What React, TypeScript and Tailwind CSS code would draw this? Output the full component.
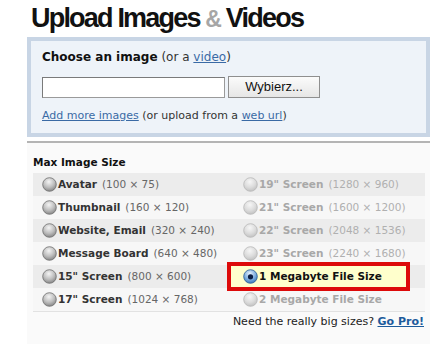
import React from "react";

function Radio({ variant }: { variant: "normal" | "disabled" | "checked" }) {
  const id = `g-${variant}`;
  const stops =
    variant === "checked"
      ? ["#e8f2fc", "#7fb0e0", "#2f6fb5"]
      : variant === "disabled"
      ? ["#f6f6f6", "#dcdcdc", "#bdbdbd"]
      : ["#f4f4f4", "#bdbdbd", "#7d7d7d"];
  const stroke = variant === "checked" ? "#2a5c94" : variant === "disabled" ? "#b8b8b8" : "#6f6f6f";
  return (
    <svg width="15" height="15" viewBox="0 0 15 15" className="shrink-0">
      <defs>
        <radialGradient id={id} cx="0.45" cy="0.3" r="0.75">
          <stop offset="0" stopColor={stops[0]} />
          <stop offset="0.55" stopColor={stops[1]} />
          <stop offset="1" stopColor={stops[2]} />
        </radialGradient>
      </defs>
      <circle cx="7.5" cy="7.5" r="6.8" fill={`url(#${id})`} stroke={stroke} strokeWidth="0.8" />
      {variant === "checked" && <circle cx="7.5" cy="7.8" r="2.6" fill="#0b1f44" />}
    </svg>
  );
}

type Opt = { label: string; dim?: string; variant: "normal" | "disabled" | "checked" };

const rows: [Opt, Opt][] = [
  [
    { label: "Avatar", dim: "(100 × 75)", variant: "normal" },
    { label: "19\" Screen", dim: "(1280 × 960)", variant: "disabled" },
  ],
  [
    { label: "Thumbnail", dim: "(160 × 120)", variant: "normal" },
    { label: "21\" Screen", dim: "(1600 × 1200)", variant: "disabled" },
  ],
  [
    { label: "Website, Email", dim: "(320 × 240)", variant: "normal" },
    { label: "22\" Screen", dim: "(2048 × 1536)", variant: "disabled" },
  ],
  [
    { label: "Message Board", dim: "(640 × 480)", variant: "normal" },
    { label: "23\" Screen", dim: "(2240 × 1680)", variant: "disabled" },
  ],
  [
    { label: "15\" Screen", dim: "(800 × 600)", variant: "normal" },
    { label: "1 Megabyte File Size", variant: "checked" },
  ],
  [
    { label: "17\" Screen", dim: "(1024 × 768)", variant: "normal" },
    { label: "2 Megabyte File Size", variant: "disabled" },
  ],
];

function OptLabel({ o }: { o: Opt }) {
  const dis = o.variant === "disabled";
  return (
    <span className="flex items-center gap-[1px] whitespace-nowrap">
      <Radio variant={o.variant} />
      <span className={dis ? "font-bold text-[#a8a8a8]" : o.variant === "checked" ? "font-bold text-[#111]" : "font-bold text-[#333]"}>
        {o.label}
      </span>
      {o.dim && <span className={dis ? "ml-[4px] text-[#b0b0b0]" : "ml-[4px] text-[#666]"}>{o.dim}</span>}
    </span>
  );
}

export default function App() {
  return (
    <div
      className="w-[439px] h-[344px] overflow-hidden bg-white"
      style={{ fontFamily: '"DejaVu Sans", Verdana, sans-serif' }}
    >
      <h1
        className="pl-[31px] pt-[3px] h-[37px] text-[27px] leading-[30px] font-bold tracking-[-1.8px] text-[#111]"
        style={{ fontFamily: '"Liberation Sans", Arial, sans-serif' }}
      >
        Upload Images <span className="text-[#a6a6a6] text-[23px]">&amp;</span> Videos
      </h1>

      <div className="ml-[27px] w-[403px] border-4 border-[#c8d5e5] bg-[#eef3f9] px-[11px] pt-[8px] pb-[10px]">
        <div className="text-[12px] leading-[16px] text-[#111]">
          <span className="font-bold">Choose an image</span>{" "}
          <span className="text-[#333]">(or a </span>
          <span className="text-[#3a6aa5] underline">video</span>
          <span className="text-[#333]">)</span>
        </div>
        <div className="mt-[11px] flex items-center gap-[3px]">
          <div className="w-[183px] h-[21px] bg-white border border-[#9a9a9a] border-t-[#7a7a7a] border-l-[#7a7a7a]" />
          <div
            className="w-[92px] h-[22px] flex items-center justify-center border border-[#8f8f8f] bg-gradient-to-b from-[#fbfbfb] to-[#e6e6e6] text-[13px] text-[#111]"
            style={{ fontFamily: '"Liberation Sans", Arial, sans-serif' }}
          >
            Wybierz...
          </div>
        </div>
        <div className="mt-[11px] text-[11px] leading-[14px] text-[#333]">
          <span className="text-[#3a6aa5] underline">Add more images</span> (or upload from a{" "}
          <span className="text-[#3a6aa5] underline">web url</span>)
        </div>
      </div>

      <div className="ml-[27px] w-[403px] mt-[4px] border-t-2 border-[#b4b4b4] bg-[#fafafa] pb-[40px]">
        <div className="pl-[6px] pt-[12px] text-[10.5px] leading-[14px] font-bold text-[#111]">Max Image Size</div>
        <div className="mt-[4px] ml-[6px] w-[392px] border-b border-[#e2e2e2] text-[10.5px]">
          {rows.map(([l, r], i) => (
            <div key={i} className={`flex h-[23px] items-center ${i % 2 === 0 ? "bg-[#ececec]" : "bg-[#f7f7f7]"}`}>
              <div className="w-[198px] pl-[9px] flex items-center">
                <OptLabel o={l} />
              </div>
              {r.variant === "checked" ? (
                <div className="w-[175px] h-[21px] flex items-center pl-[12px] bg-[#ffffcc] outline-[4px] outline-solid outline-[#dd0a0a]">
                  <OptLabel o={r} />
                </div>
              ) : (
                <div className="pl-[12px] flex items-center">
                  <OptLabel o={r} />
                </div>
              )}
            </div>
          ))}
        </div>
        <div className="mt-[3px] pr-[6px] text-right text-[11px] leading-[14px] text-[#222]">
          Need the really big sizes? <span className="font-bold text-[#1d5b9c] underline">Go Pro!</span>
        </div>
        <div className="pl-[6px] mt-[11px] text-[14px] font-bold text-[#111]">Advanced Uploading</div>
      </div>
    </div>
  );
}
